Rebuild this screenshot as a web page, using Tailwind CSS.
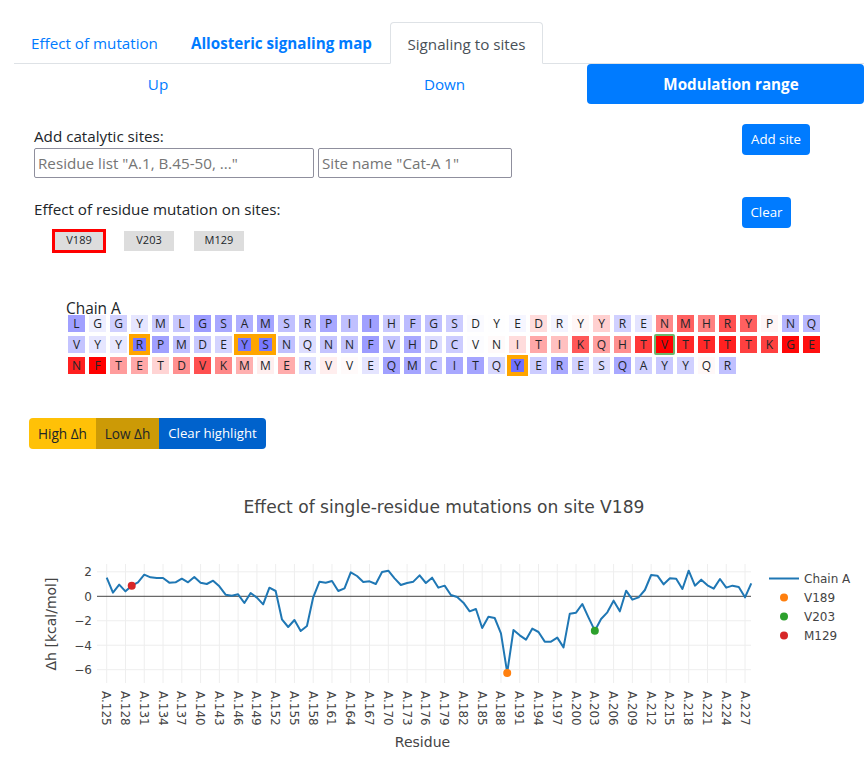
<!DOCTYPE html>
<html lang="en">
<head>
  <meta charset="UTF-8" />
  <title>Signaling to sites</title>
  <script src="https://cdn.jsdelivr.net/npm/@tailwindcss/browser@4"></script>
</head>
<body class="bg-white text-[#212529] font-['Open_Sans',sans-serif] text-[15.2px] overflow-hidden">
  <div class="w-[864px] h-[772px] overflow-hidden">
    <!-- Tabs -->
    <ul class="flex items-end h-[64px] ml-[14px] border-b border-[#dee2e6]">
      <li class="w-[160px] pl-[17px] h-[41px] leading-[42px] text-[#007bff]">Effect of mutation</li>
      <li class="w-[216px] pl-[17px] h-[41px] leading-[42px] text-[#007bff] font-bold">Allosteric signaling map</li>
      <li class="w-[153px] -mb-px h-[42px] leading-[42px] text-center text-[#495057] bg-white border border-b-white border-[#dee2e6] rounded-t">Signaling to sites</li>
    </ul>
    <!-- Pills -->
    <ul class="flex h-[40px] ml-[14px] leading-[41px] text-center text-[#007bff]">
      <li class="w-[288px]">Up</li>
      <li class="w-[285px]">Down</li>
      <li class="flex-1 pl-[11px] bg-[#007bff] text-white font-bold rounded">Modulation range</li>
    </ul>
    <!-- Add site -->
    <div class="flex justify-between h-[73px] ml-[34px] mr-[54px] mt-[20px]">
      <div>
        <div class="h-[24px] leading-[24px]">Add catalytic sites:</div>
        <div class="flex gap-[4px]">
          <input class="w-[280px] h-[30px] px-[3px] border border-[#8f8f9d] rounded-[2px] placeholder:text-[#757575]" placeholder='Residue list "A.1, B.45-50, ..."' />
          <input class="w-[194px] h-[30px] px-[3px] border border-[#8f8f9d] rounded-[2px] placeholder:text-[#757575]" placeholder='Site name "Cat-A 1"' />
        </div>
      </div>
      <button class="w-[68px] h-[31px] bg-[#007bff] text-white rounded text-[13.3px]">Add site</button>
    </div>
    <!-- Sites -->
    <div class="flex justify-between h-[56px] ml-[34px] mr-[73px]">
      <div>
        <div class="h-[32px] leading-[24px]">Effect of residue mutation on sites:</div>
        <div class="flex items-center gap-[18px] ml-[18px] text-[11px]">
          <div class="w-[54px] h-[24px] border-[3px] border-[#ff0000] bg-[#dddddd] text-center leading-[16px]">V189</div>
          <div class="w-[50px] h-[20px] bg-[#dddddd] text-center leading-[18px]">V203</div>
          <div class="w-[50px] h-[20px] ml-[2px] bg-[#dddddd] text-center leading-[18px]">M129</div>
        </div>
      </div>
      <button class="w-[49px] h-[31px] bg-[#007bff] text-white rounded text-[13.3px]">Clear</button>
    </div>
    <!-- Sequence -->
    <div class="ml-[66px] mt-[45px]">
      <div class="h-[15px] leading-[22px] text-[15.4px]">Chain A</div>
      <div id="seq" class="grid grid-cols-[repeat(36,21px)] auto-rows-[21px] text-[12px]"></div>
    </div>
    <!-- Highlight buttons -->
    <div class="flex w-[237px] h-[31px] ml-[29px] mt-[42px] text-[13.2px] leading-[31px] text-center">
      <div class="w-[67px] bg-[#ffc107] rounded-l text-[13.6px]">High Δh</div>
      <div class="w-[63px] bg-[#cc9a06] text-[13.6px]">Low Δh</div>
      <div class="flex-1 bg-[#0062cc] text-white rounded-r">Clear highlight</div>
    </div>
    <!-- Plot -->
    <svg id="plot" width="864" height="323" viewBox="0 449 864 323" class="block fill-[#444444]" font-family="DejaVu Sans, sans-serif"></svg>
  </div>

  <script>
  // sequence heatmap: letter, colour, mark (h = orange highlight, g = green selected)
  const rows = [
    'L:a0a0ff G:eeeeff G:d0d0ff Y:e6e6ff M:c8c8ff L:c8c8ff G:9c9cff S:a8a8ff A:b0b0ff M:a4a4ff S:c0c0ff R:c0c0ff P:a8a8ff I:c0c0ff I:a0a0ff H:c8c8ff F:bcbcff G:c0c0ff S:ccccff D:fafaff Y:fefeff E:f6f6ff D:ffdcdc R:f4f4ff Y:fff6f6 Y:ffd0d0 R:d0d0ff E:e4e4ff N:ff8888 M:ff6060 H:ff8080 R:ff5050 Y:ff6060 P:fff6f6 N:b4b4ff Q:b8b8ff',
    'V:c4c4ff Y:e6e6ff Y:e8e8ff R:7878ff:h P:a0a0ff M:c0c0ff D:c8c8ff E:d4d4ff Y:7878ff:h S:7878ff:h N:c0c0ff Q:dedeff N:c4c4ff N:c4c4ff F:9c9cff V:c4c4ff H:a8a8ff D:dcdcff C:ccccff V:fcfcff N:fffafa I:ffdcdc T:ffa8a8 I:ffc0c0 K:ff5858 Q:ffa0a0 H:ff9090 T:ff3838 V:ff0000:g T:ff2828 T:ff2828 T:ff2020 T:ff4040 K:ff4040 G:ff0808 E:ff1010',
    'N:ff2020 F:ff0000 T:ff9c9c E:ffa8a8 T:ffd4d4 D:ff9090 V:ff5050 K:ff8888 M:ffb0b0 M:ffeeee E:ffacac R:e0e0ff V:ffeeee V:fffafa E:e4e4ff Q:a0a0ff M:a4a4ff C:c4c4ff I:a8a8ff T:a4a4ff Q:d8d8ff Y:7070ff:h E:ccccff R:a8a8ff E:d0d0ff S:dcdcff Q:a8a8ff A:d0d0ff Y:c8c8ff Y:d0d0ff Q:fff8f8 R:c0c0ff'
  ];
  const seq = document.getElementById('seq');
  rows.forEach((row,r)=>{
    const cells = row.split(' ');
    cells.forEach(c=>{
      const [ch,col,mark] = c.split(':');
      const wrap = document.createElement('div');
      const cell = document.createElement('div');
      cell.textContent = ch;
      cell.style.backgroundColor = '#'+col;
      if(mark==='h'){
        wrap.className = 'bg-[#ffa500] p-[4px]';
        cell.className = 'w-[13px] h-[13px] text-center leading-[13px] overflow-visible';
      }else if(mark==='g'){
        cell.className = 'w-[21px] h-[21px] border-2 border-[#6cb66c] rounded-[2px] text-center leading-[17px]';
      }else{
        wrap.className = 'p-[2px]';
        cell.className = 'w-[17px] h-[17px] text-center leading-[17px]';
      }
      wrap.appendChild(cell);
      seq.appendChild(wrap);
    });
    for(let i=cells.length;i<36;i++) seq.appendChild(document.createElement('div'));
  });

  // line plot, values traced as pixel rows
  const ys = [83,128,104,124,107,97,74,82,84,84,98,97,86,97,81,98,102,92,109,134,137,133,159,129,143,163,113,123,208,231,210,243,228,142,95,98,93,123,115,67,78,96,94,102,66,62,85,105,99,95,76,99,83,113,
    107,135,141,158,184,177,234,200,204,250,368,240,256,269,236,246,275,275,263,292,191,188,162,203,242,207,187,152,184,122,149,142,120,75,77,103,85,86,117,62,107,89,106,116,87,113,107,111,142,100];
  const X = i=>106.7+i*6.258, Y = z=>550+z/3;
  const yTick = v=>596.3-v*12.23;
  const plot = document.getElementById('plot');
  const NS = 'http://www.w3.org/2000/svg';
  function el(tag,attrs,text){
    const e = document.createElementNS(NS,tag);
    for(const k in attrs) e.setAttribute(k,attrs[k]);
    if(text) e.textContent = text;
    plot.appendChild(e);
    return e;
  }
  // grid
  for(let i=0;i<=102;i+=3){
    el('line',{x1:X(i),x2:X(i),y1:564,y2:683,stroke:'#eeeeee','stroke-width':1});
    const x = X(i)-4.5;
    el('text',{transform:`translate(${x},691) rotate(90)`,'font-size':12},'A.'+(125+i));
  }
  [2,0,-2,-4,-6].forEach(v=>{
    if(v!==0) el('line',{x1:97,x2:751,y1:yTick(v),y2:yTick(v),stroke:'#eeeeee','stroke-width':1});
    el('text',{x:92,y:yTick(v)+4.5,'text-anchor':'end','font-size':12},String(v).replace('-','−'));
  });
  el('line',{x1:97,x2:751,y1:yTick(0),y2:yTick(0),stroke:'#444444','stroke-width':1});
  // trace
  el('polyline',{points:ys.map((z,i)=>X(i)+','+Y(z)).join(' '),fill:'none',stroke:'#1f77b4','stroke-width':2,'stroke-linejoin':'round'});
  // site markers
  [[64,673,'#ff7f0e'],[78,630.7,'#2ca02c'],[4,585.7,'#d62728']].forEach(([i,y,c])=>el('circle',{cx:X(i),cy:y,r:4,fill:c}));
  // titles
  el('text',{x:444,y:513,'text-anchor':'middle','font-size':17.1},'Effect of single-residue mutations on site V189');
  el('text',{x:422.5,y:747,'text-anchor':'middle','font-size':14},'Residue');
  el('text',{transform:'translate(56,624) rotate(-90)','text-anchor':'middle','font-size':14},'Δh [kcal/mol]');
  // legend
  el('line',{x1:769,x2:799,y1:578.5,y2:578.5,stroke:'#1f77b4','stroke-width':2});
  el('text',{x:804,y:583,'font-size':12},'Chain A');
  [['V189','#ff7f0e',597.5],['V203','#2ca02c',616.5],['M129','#d62728',635.5]].forEach(([t,c,y])=>{
    el('circle',{cx:784,cy:y,r:4,fill:c});
    el('text',{x:804,y:y+4.5,'font-size':12},t);
  });
  </script>
</body>
</html>
